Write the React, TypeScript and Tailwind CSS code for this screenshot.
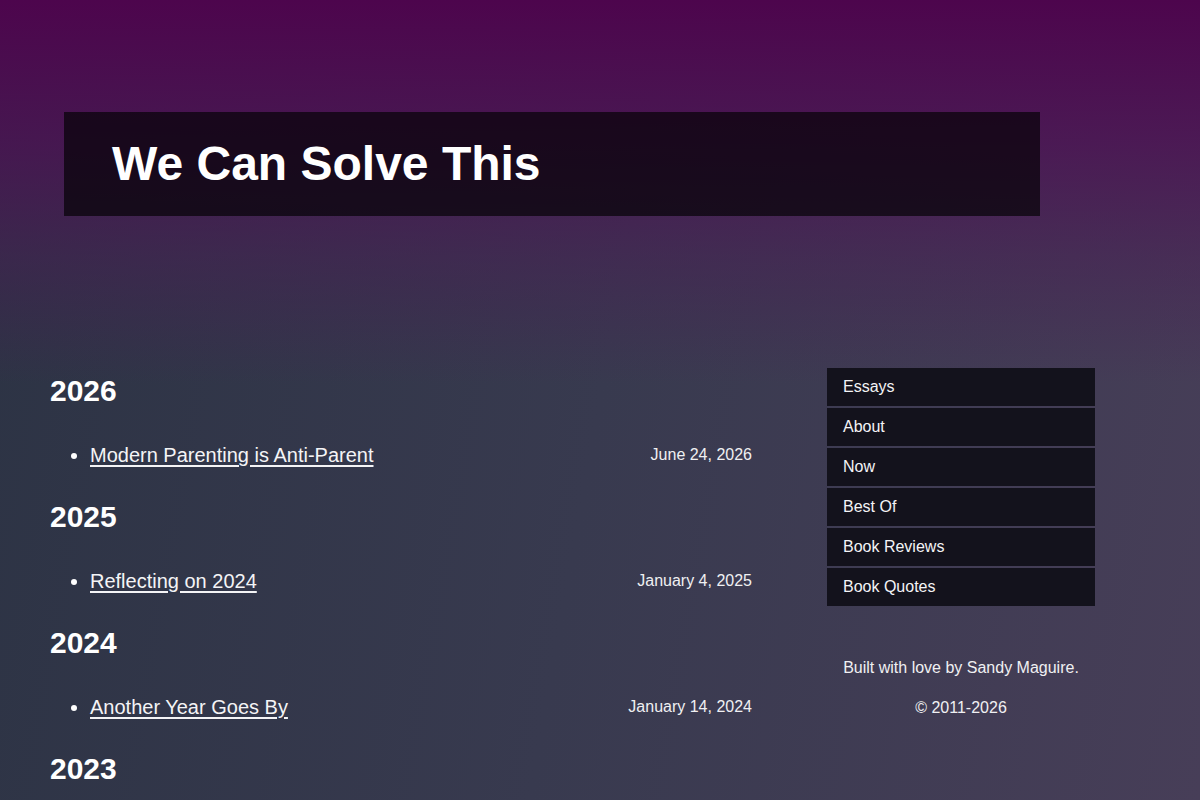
import React from "react";

const years = [
  { year: "2026", posts: [{ title: "Modern Parenting is Anti-Parent", date: "June 24, 2026" }] },
  { year: "2025", posts: [{ title: "Reflecting on 2024", date: "January 4, 2025" }] },
  { year: "2024", posts: [{ title: "Another Year Goes By", date: "January 14, 2024" }] },
  { year: "2023", posts: [] as { title: string; date: string }[] },
];

const nav = ["Essays", "About", "Now", "Best Of", "Book Reviews", "Book Quotes"];

export default function App() {
  return (
    <div
      className="relative h-[800px] w-full overflow-hidden text-white bg-[linear-gradient(100deg,#2c3344_0%,#383a4f_50%,#473e58_100%)]"
      style={{ fontFamily: '"Liberation Sans", Arial, sans-serif' }}
    >
      {/* purple wash fading down from the top edge */}
      <div className="pointer-events-none absolute inset-0 bg-[linear-gradient(to_bottom,#4d054d_0%,rgba(78,14,84,0.75)_18%,rgba(75,25,85,0.45)_32%,rgba(70,40,80,0)_48%)]" />

      <div className="relative">
        <header className="pt-[112px] pl-[64px]">
          <div className="w-[976px] bg-black/65 py-[28px] pl-[48px]">
            <h1 className="text-[48px] font-bold leading-[48px]">We Can Solve This</h1>
          </div>
        </header>

        <div className="mt-[152px] flex">
          <main className="ml-[50px] w-[702px]">
            {years.map((y) => (
              <section key={y.year} className="h-[126px]">
                <h2 className="h-[40px] pt-[3px] text-[30px] font-bold leading-[40px]">{y.year}</h2>
                <ul className="mt-[35px] list-disc pl-[40px]">
                  {y.posts.map((p) => (
                    <li key={p.title} className="text-[20px] leading-[24px]">
                      <div className="flex items-center justify-between">
                        <a href="#" className="text-[#f4f4f6] underline underline-offset-[3px]">
                          {p.title}
                        </a>
                        <span className="text-[16px] leading-[18px] text-[#f0f0f2]">{p.date}</span>
                      </div>
                    </li>
                  ))}
                </ul>
              </section>
            ))}
          </main>

          <aside className="ml-[75px] w-[268px]">
            <nav className="flex flex-col gap-[2px]">
              {nav.map((n) => (
                <a key={n} href="#" className="block h-[38px] bg-[#13121c] pl-[16px] text-[16px] leading-[38px] text-[#f4f4f6]">
                  {n}
                </a>
              ))}
            </nav>
            <div className="mt-[53px] text-center text-[16px] leading-[18px] text-[#f0f0f2]">
              <p>Built with love by Sandy Maguire.</p>
              <p className="mt-[22px]">© 2011-2026</p>
            </div>
          </aside>
        </div>
      </div>
    </div>
  );
}
